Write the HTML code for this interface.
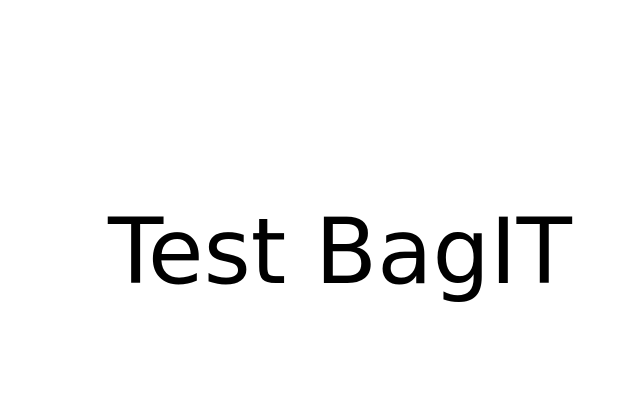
<!DOCTYPE html>
<html><head><meta charset="utf-8"><style>
html,body{margin:0;padding:0;width:640px;height:400px;background:#fff;overflow:hidden}
.t{position:absolute;left:108px;top:200px;font-family:"DejaVu Sans",sans-serif;font-size:90.5px;line-height:normal;color:#000;white-space:nowrap}
</style></head><body><div class="t">Test BagIT</div></body></html>
